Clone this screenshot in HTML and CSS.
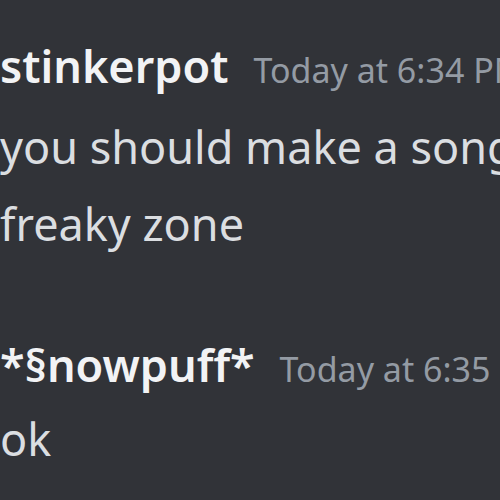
FILE: index.html
```html
<!DOCTYPE html>
<html lang="en">
  <head>
    <meta charset="UTF-8" />
    <meta name="viewport" content="width=device-width, initial-scale=1.0" />
    <title>Chat</title>
    <link rel="stylesheet" href="styles.css">
  </head>
  <body>
    <div class="chat">
      <div class="group">
        <div class="header">
          <span class="username">stinkerpot</span>
          <span class="timestamp">Today at 6:34 PM</span>
        </div>
        <div class="message">you should make a song</div>
        <div class="message">freaky zone</div>
      </div>

      <div class="group second">
        <div class="header">
          <span class="username">*§nowpuff*</span>
          <span class="timestamp">Today at 6:35 PM</span>
        </div>
        <div class="message">ok</div>
      </div>
    </div>
  </body>
</html>
```

FILE: styles.css
```css
:root {
  --background-color: #313338;
  --name-color: #f2f3f5;
  --text-color: #dbdee1;
  --muted-color: #949ba4;
}

* {
  box-sizing: border-box;
}

html,
body {
  margin: 0;
  height: 100%;
  overflow: hidden;
}

body {
  background: var(--background-color);
  font-family: "Noto Sans", "Open Sans", sans-serif;
  font-size: 45px;
}

.chat {
  display: flex;
  flex-direction: column;
  padding: 35px 0 0 0;
  white-space: nowrap;
}

.group.second {
  margin-top: 79px;
}

.header {
  display: flex;
  align-items: baseline;
  gap: 25px;
  line-height: 62px;
}

.username {
  color: var(--name-color);
  font-weight: 600;
}

.timestamp {
  color: var(--muted-color);
  font-size: 34px;
}

.message {
  color: var(--text-color);
  line-height: 62px;
  margin-top: 15px;
}

.second .message {
  margin-top: 8px;
}
```
